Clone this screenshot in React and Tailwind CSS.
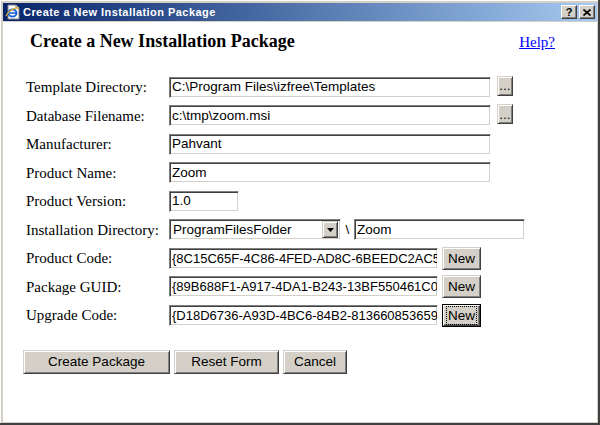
import React from "react";

const sans = { fontFamily: '"Liberation Sans", Arial, sans-serif' };

function Btn({ children, className = "", focused = false }) {
  if (focused) {
    return (
      <div className={"border border-black flex " + className} style={sans}>
        <div className="flex-1 flex items-center justify-center bg-[#d4d0c8] border border-t-white border-l-white border-r-[#404040] border-b-[#404040] shadow-[inset_-1px_-1px_0_#808080] text-[13.5px] text-black leading-none">
          <span className="outline outline-1 outline-dotted outline-black px-[1px] py-[2px]">{children}</span>
        </div>
      </div>
    );
  }
  return (
    <div
      className={
        "flex items-center justify-center bg-[#d4d0c8] border border-t-[#d4d0c8] border-l-[#d4d0c8] border-r-[#404040] border-b-[#404040] shadow-[inset_1px_1px_0_#fff,inset_-1px_-1px_0_#808080] text-[13.5px] text-black leading-none " +
        className
      }
      style={sans}
    >
      {children}
    </div>
  );
}

function Field({ value, className = "", size = "text-[13.5px]" }) {
  return (
    <div
      className={
        "h-[21px] bg-white border border-t-[#808080] border-l-[#808080] border-r-white border-b-white shadow-[inset_1px_1px_0_#404040,inset_-1px_-1px_0_#d4d0c8] pl-[2px] flex items-center overflow-hidden whitespace-nowrap text-black " +
        size +
        " " +
        className
      }
      style={sans}
    >
      {value}
    </div>
  );
}

function Row({ label, children }) {
  return (
    <div className="flex items-center h-[28.5px]">
      <div className="w-[143px] text-[15px] text-black" style={{ fontFamily: '"Liberation Serif", "Times New Roman", serif' }}>
        {label}
      </div>
      <div className="flex items-center">{children}</div>
    </div>
  );
}

function IEIcon() {
  return (
    <svg width="16" height="16" viewBox="0 0 16 16">
      <path d="M3 1h8l3 3v11H3z" fill="#fff" stroke="#808080" strokeWidth="1" />
      <path d="M11 1v3h3" fill="#e0e0e0" stroke="#808080" strokeWidth="1" />
      <ellipse cx="7.5" cy="9" rx="4" ry="3.6" fill="none" stroke="#1c64d8" strokeWidth="2" />
      <path d="M4 9h7.5" stroke="#1c64d8" strokeWidth="1.6" />
      <path d="M1 12c2-5 9-9 13-8" fill="none" stroke="#f0b020" strokeWidth="1.2" />
    </svg>
  );
}

function TitleButton({ children }) {
  return (
    <div className="w-[16px] h-[14px] flex items-center justify-center bg-[#d4d0c8] border border-t-white border-l-white border-r-[#404040] border-b-[#404040] shadow-[inset_-1px_-1px_0_#808080]">
      {children}
    </div>
  );
}

export default function App() {
  return (
    <div className="w-[600px] h-[425px] bg-[#d4d0c8] flex flex-col pl-[3px] pt-[3px] pr-[1px] pb-[1px] border-r-2 border-b-2 border-r-[#404040] border-b-[#404040] shadow-[inset_1px_1px_0_#fff]">
      {/* title bar */}
      <div className="h-[18px] flex items-center bg-linear-to-r from-[#0a246a] to-[#a6caf0] pl-[2px] pr-[2px]">
        <IEIcon />
        <div className="ml-[2px] text-white font-bold text-[11px] tracking-[0.45px] leading-none" style={sans}>
          Create a New Installation Package
        </div>
        <div className="ml-auto flex gap-[2px]">
          <TitleButton>
            <span className="text-[11px] font-bold leading-none text-black" style={sans}>?</span>
          </TitleButton>
          <TitleButton>
            <svg width="8" height="7" viewBox="0 0 8 7">
              <path d="M0.5 0.5L7.5 6.5M7.5 0.5L0.5 6.5" stroke="#000" strokeWidth="1.6" />
            </svg>
          </TitleButton>
        </div>
      </div>

      {/* client */}
      <div className="flex-1 bg-white mt-[1px] flex flex-col pt-[6px]">
        <div className="h-[21px] flex items-baseline pl-[27px] pr-[42px]" style={{ fontFamily: '"Liberation Serif", "Times New Roman", serif' }}>
          <div className="text-[18px] font-bold text-black">Create a New Installation Package</div>
          <a href="#" className="ml-auto text-[15px] text-[#0000ff] underline">Help?</a>
        </div>

        <div className="mt-[24px] pl-[23px] flex flex-col">
          <Row label="Template Directory:">
            <Field value="C:\Program Files\izfree\Templates" className="w-[322px]" />
            <Btn className="ml-[6px] w-[16px] h-[20px] -mt-[3px]">...</Btn>
          </Row>
          <Row label="Database Filename:">
            <Field value="c:\tmp\zoom.msi" className="w-[322px]" />
            <Btn className="ml-[6px] w-[16px] h-[20px] -mt-[3px]">...</Btn>
          </Row>
          <Row label="Manufacturer:">
            <Field value="Pahvant" className="w-[322px]" />
          </Row>
          <Row label="Product Name:">
            <Field value="Zoom" className="w-[322px]" />
          </Row>
          <Row label="Product Version:">
            <Field value="1.0" className="w-[70px]" />
          </Row>
          <Row label="Installation Directory:">
            <div
              className="w-[172px] h-[21px] bg-white border border-t-[#808080] border-l-[#808080] border-r-white border-b-white shadow-[inset_1px_1px_0_#404040,inset_-1px_-1px_0_#d4d0c8] flex items-center pl-[3px] pr-[2px] text-[13.5px] text-black"
              style={sans}
            >
              <span className="flex-1">ProgramFilesFolder</span>
              <div className="w-[16px] h-[17px] flex items-center justify-center bg-[#d4d0c8] border border-t-[#d4d0c8] border-l-[#d4d0c8] border-r-[#404040] border-b-[#404040] shadow-[inset_1px_1px_0_#fff,inset_-1px_-1px_0_#808080]">
                <svg width="7" height="4" viewBox="0 0 7 4">
                  <path d="M0 0h7L3.5 4z" fill="#000" />
                </svg>
              </div>
            </div>
            <span className="w-[13px] text-center text-[13.5px] text-black" style={sans}>\</span>
            <Field value="Zoom" className="w-[171px]" />
          </Row>
          <Row label="Product Code:">
            <Field value="{8C15C65F-4C86-4FED-AD8C-6BEEDC2AC5" size="text-[13px]" className="w-[269px]" />
            <Btn className="ml-[4px] w-[39px] h-[23px]">New</Btn>
          </Row>
          <Row label="Package GUID:">
            <Field value="{89B688F1-A917-4DA1-B243-13BF550461C07" size="text-[13px]" className="w-[269px]" />
            <Btn className="ml-[4px] w-[39px] h-[23px]">New</Btn>
          </Row>
          <Row label="Upgrade Code:">
            <Field value="{D18D6736-A93D-4BC6-84B2-813660853659}" size="text-[13px]" className="w-[269px]" />
            <Btn focused className="ml-[4px] w-[39px] h-[23px]">New</Btn>
          </Row>
        </div>

        <div className="mt-[20px] pl-[20px] flex">
          <Btn className="w-[147px] h-[24px]">Create Package</Btn>
          <Btn className="ml-[4px] w-[105px] h-[24px]">Reset Form</Btn>
          <Btn className="ml-[4px] w-[64px] h-[24px]">Cancel</Btn>
        </div>
      </div>
    </div>
  );
}
